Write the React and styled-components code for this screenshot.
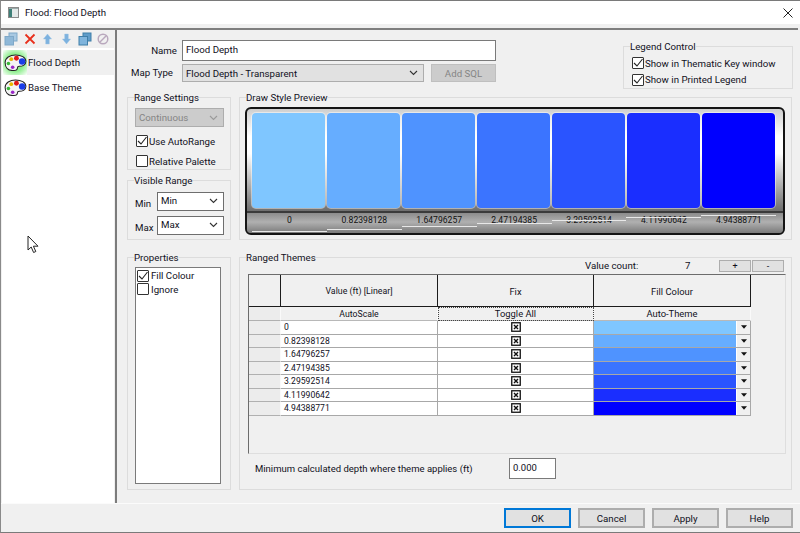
import React from 'react';
import styled, { createGlobalStyle } from 'styled-components';

const Global = createGlobalStyle`
  html, body {
    margin: 0;
    overflow: hidden;
    background: #f0f0f0;
  }
  * {
    box-sizing: border-box;
  }
`;

const Win = styled.div`
  width: 800px;
  height: 533px;
  display: flex;
  flex-direction: column;
  background: #f0f0f0;
  border-top: 1px solid #7a7a7a;
  border-left: 1px solid #8a8a8a;
  border-bottom: 1px solid #7a7a7a;
  font-family: Roboto, "Noto Sans", sans-serif;
  font-size: 9.7px;
  color: #10101c;
  white-space: nowrap;
`;

const TitleBar = styled.div`
  height: 23px;
  flex: none;
  display: flex;
  align-items: center;
  background: #fff;
  padding: 0 7px 0 7px;
`;

const TitleText = styled.span`
  margin-left: 6px;
  flex: 1;
`;

const Body = styled.div`
  flex: 1;
  min-height: 0;
  margin-top: 4px;
  display: flex;
  border-top: 2px solid #7e7e7e;
  margin-right: 2px;
`;

const Sidebar = styled.div`
  position: relative;
  width: 112px;
  margin-left: 1px;
  background: #fff;
  flex: none;
`;

const Toolbar = styled.div`
  height: 18px;
  display: flex;
  align-items: center;
  background: #f0f0f0;
  margin-bottom: 2px;
`;

const ToolSlot = styled.span`
  width: 18.4px;
  display: flex;
  justify-content: center;
`;

const ThemeRow = styled.div`
  height: 25px;
  display: flex;
  align-items: center;
  padding-left: 1px;
`;

const ThemeIcon = styled.span`
  width: 24px;
  height: 25px;
  display: flex;
  align-items: center;
  justify-content: center;
  background: ${(p) => (p.$glow ? 'radial-gradient(circle, #8cee8c 50%, #ffffff 100%)' : 'transparent')};
`;

const ThemeName = styled.span`
  flex: 1;
  height: 25px;
  line-height: 25px;
  padding-left: 1px;
  background: ${(p) => (p.$active ? '#f0f0f0' : 'transparent')};
`;

const Pointer = styled.svg`
  position: absolute;
  left: 25px;
  top: 205px;
`;

const Main = styled.div`
  flex: 1;
  margin-left: 1px;
  border-left: 2px solid #7c7c7c;
  padding: 9px 5px 0 10px;
  display: flex;
  flex-direction: column;
`;

const TopRow = styled.div`
  height: 51px;
  flex: none;
  display: flex;
  justify-content: space-between;
`;

const Form = styled.div`
  display: flex;
  flex-direction: column;
  gap: 3px;
  padding-top: 1px;
`;

const FormRow = styled.div`
  display: flex;
  align-items: center;
`;

const FormLabel = styled.span`
  width: 50px;
  text-align: right;
  margin-right: 5px;
  padding-bottom: 1px;
  padding-right: ${(p) => p.$pr || 0}px;
`;

const TextBox = styled.div`
  width: ${(p) => p.$w}px;
  height: ${(p) => p.$h}px;
  background: #fff;
  border: 1px solid #7a7a7a;
  padding: 0 0 3px 3px;
  display: flex;
  align-items: center;
`;

const Select = styled.div`
  width: ${(p) => p.$w}px;
  height: ${(p) => p.$h}px;
  display: flex;
  align-items: center;
  justify-content: space-between;
  padding: 0 5px ${(p) => (p.$white ? 2 : 0)}px 3px;
  background: ${(p) => (p.$white ? '#fff' : p.$off ? '#cccccc' : '#e1e1e1')};
  color: ${(p) => (p.$off ? '#858585' : 'inherit')};
  border: ${(p) => (p.$white ? '1px solid #6e6e6e' : '1px solid #adadad')};
`;

const GrayButton = styled.div`
  width: 65px;
  height: 18px;
  margin-left: 7px;
  display: flex;
  align-items: center;
  justify-content: center;
  background: #cccccc;
  border: 1px solid #bfbfbf;
  color: #858585;
`;

const Group = styled.fieldset`
  margin: 0;
  padding: 0;
  min-width: 0;
  width: ${(p) => (p.$w ? `${p.$w}px` : 'auto')};
  height: ${(p) => (p.$h ? `${p.$h}px` : 'auto')};
  border: 1px solid #dcdcdc;
  display: flex;
  flex-direction: column;
`;

const Caption = styled.legend`
  margin-left: 6px;
  padding: 0;
  height: 14px;
  line-height: 16px;
`;

const Columns = styled.div`
  display: grid;
  grid-template-columns: 104px 553px;
  grid-template-rows: 150px 240px;
  column-gap: 8px;
  row-gap: 10px;
`;

const Stack = styled.div`
  display: flex;
  flex-direction: column;
  gap: 3px;
`;

const RangeBody = styled.div`
  padding: ${(p) => p.$pt}px 6px 0 7px;
  display: flex;
  flex-direction: column;
`;

const CheckRow = styled.label`
  display: flex;
  align-items: center;
  gap: ${(p) => p.$gap ?? 1}px;
  height: ${(p) => p.$h || 20}px;
  padding-left: ${(p) => p.$pl || 0}px;
  margin-top: ${(p) => p.$mt || 0}px;
`;

const Box = styled.span`
  width: 12px;
  height: 12px;
  flex: none;
  border: 1px solid #333;
  border-radius: 1px;
  background: #fff;
  display: flex;
  align-items: center;
  justify-content: center;
`;

const MinMaxRow = styled.div`
  display: flex;
  align-items: center;
  justify-content: space-between;
  margin-bottom: 5px;
`;

const MinMaxLabel = styled.span`
  padding-top: 3px;
`;

const Preview = styled.div`
  margin: 3px 6px 0 5px;
  height: 128px;
  border: 2px solid #141414;
  border-radius: 6px;
  background: linear-gradient(#cfcfcf 0, #ffffff 22%, #ffffff 36%, #6f6f6f 82%);
  display: flex;
  flex-direction: column;
  overflow: hidden;
`;

const SwatchRow = styled.div`
  display: flex;
  gap: 2px;
  padding: 4px 0 0 5px;
`;

const Swatch = styled.div`
  width: 73px;
  height: 95px;
  border-radius: 4px;
  background: ${(p) => p.$c};
  box-shadow: 0 0 0 1px rgba(255, 255, 255, 0.45);
`;

const Strip = styled.div`
  margin-top: 3px;
  flex: 1;
  display: flex;
  padding-left: 5px;
  border-top: 2px solid #3a3a3a;
  background: linear-gradient(#8b8b8b, #b0b0b0 45%, #7a7a7a);
`;

const StripCell = styled.div`
  position: relative;
  width: 74.9px;
  text-align: center;
  font-size: 8.6px;
  line-height: 15px;
  color: #111;
`;

const Tick = styled.span`
  position: absolute;
  left: 0;
  right: 0;
  top: ${(p) => p.$y}px;
  height: 1px;
  background: #e8e8e8;
`;

const CountRow = styled.div`
  margin-top: -5px;
  height: 13px;
  display: flex;
  align-items: center;
  padding-right: 7px;
  justify-content: flex-end;
`;

const CountLabel = styled.span`
  width: 100px;
`;

const CountValue = styled.span`
  width: 33px;
`;

const Mini = styled.div`
  width: 32px;
  height: 12px;
  margin-left: 1px;
  background: #e1e1e1;
  border: 1px solid #adadad;
  display: flex;
  align-items: center;
  justify-content: center;
  font-size: 9px;
  line-height: 10px;
`;

const Frame = styled.div`
  margin: 2px 5px 0 8px;
  height: 180px;
  border-left: 1px solid #6c6c6c;
  border-top: 1px solid #6c6c6c;
  border-right: 1px solid #dedede;
  border-bottom: 1px solid #dedede;
`;

const Table = styled.div`
  display: grid;
  grid-template-columns: 32px 157px 156px 157px;
  grid-template-rows: 32px 14px repeat(7, 13.5px);
  font-size: 9.4px;
`;

const HeadCell = styled.div`
  padding-top: 1px;
  border-right: 1px solid #1c1c1c;
  border-bottom: 1px solid #1c1c1c;
  display: flex;
  align-items: center;
  justify-content: center;
  font-size: ${(p) => (p.$small ? '8.8px' : 'inherit')};
`;

const ActionCell = styled.div`
  display: flex;
  align-items: center;
  justify-content: center;
  font-size: ${(p) => (p.$small ? '8.7px' : 'inherit')};
  border-right: 1px solid #fafafa;
  border-bottom: 1px solid #b8b8b8;
  ${(p) => p.$focus && 'outline: 1px dotted #444; outline-offset: -1px;'}
`;

const RowHead = styled.div`
  background: #ececec;
  border-right: 1px solid #fafafa;
  border-bottom: 1px solid #b0b0b0;
`;

const ValueCell = styled.div`
  background: #fff;
  border-right: 1px solid #a8a8a8;
  border-bottom: 1px solid #a8a8a8;
  padding-left: 3px;
  display: flex;
  align-items: center;
  font-size: 8.6px;
`;

const FixCell = styled(ValueCell)`
  padding-left: 0;
  justify-content: center;
`;

const ColourCell = styled.div`
  display: flex;
  border-bottom: 1px solid #a8a8a8;
`;

const ColourFill = styled.div`
  flex: 1;
  background: ${(p) => p.$c};
`;

const ArrowBtn = styled.div`
  width: 15px;
  background: #f0f0f0;
  border-left: 1px solid #fff;
  border-right: 1px solid #a8a8a8;
  display: flex;
  align-items: center;
  justify-content: center;
`;

const DepthRow = styled.div`
  margin-top: 4px;
  display: flex;
  align-items: center;
  padding-left: 15px;
  font-size: 9.5px;
`;

const DepthLabel = styled.span`
  width: 254px;
`;

const ListBox = styled.div`
  margin: 3px 9px 5px 7px;
  flex: 1;
  background: #fff;
  border: 1px solid #7a7a7a;
  padding: 1px 0 0 1px;
`;

const Footer = styled.div`
  height: 29px;
  flex: none;
  border-top: 1px solid #fbfbfb;
  display: flex;
  align-items: flex-start;
  justify-content: flex-end;
  gap: 7px;
  padding: 4px 7px 0 0;
`;

const FootBtn = styled.div`
  width: 67px;
  height: 20px;
  background: #e1e1e1;
  border: ${(p) => (p.$main ? '2px solid #0078d7' : '2px solid #adadad')};
  display: flex;
  align-items: center;
  justify-content: center;
`;

const shades = ['#7fc6ff', '#66adff', '#4f93ff', '#3b74ff', '#2a54ff', '#1a2eff', '#0000ff'];
const values = ['0', '0.82398128', '1.64796257', '2.47194385', '3.29592514', '4.11990642', '4.94388771'];
const ticks = [18, 16, 13, 10, 7, 4, 2];

const Chevron = ({ color = '#333' }) => (
  <svg width="9" height="6" viewBox="0 0 9 6">
    <path d="M1 1l3.5 3.5L8 1" fill="none" stroke={color} strokeWidth="1.1" />
  </svg>
);

const Tick3 = () => (
  <svg width="10" height="10" viewBox="0 0 10 10">
    <path d="M1 5l3 3 5.5-7" fill="none" stroke="#222" strokeWidth="1.1" />
  </svg>
);

const Check = ({ on }) => <Box>{on && <Tick3 />}</Box>;

const XBox = () => (
  <svg width="10" height="10" viewBox="0 0 10 10">
    <rect x="0.75" y="0.75" width="8.5" height="8.5" fill="#fff" stroke="#111" strokeWidth="1.3" />
    <path d="M3 3l4 4M7 3l-4 4" stroke="#111" strokeWidth="1.4" />
  </svg>
);

const CopyIcon = ({ faded }) => (
  <svg width="14" height="14" viewBox="0 0 14 14">
    <rect x="5" y="1" width="8" height="8" fill={faded ? '#a9c9e2' : '#5f9cc9'} stroke={faded ? '#7fa8c8' : '#3f7ea8'} />
    <rect x="1" y="4.5" width="8.5" height="8.5" fill={faded ? '#8fb8d8' : '#7fb4dc'} stroke={faded ? '#7fa8c8' : '#3f7ea8'} />
  </svg>
);

const RedX = () => (
  <svg width="12" height="12" viewBox="0 0 12 12">
    <path d="M1.5 1.5l9 9M10.5 1.5l-9 9" stroke="#e8301c" strokeWidth="1.8" />
  </svg>
);

const BlueArrow = ({ down }) => (
  <svg width="9" height="12" viewBox="0 0 10 12" style={down ? { transform: 'scaleY(-1)' } : undefined}>
    <path d="M5 0.5L9.5 6H7v5.5H3V6H0.5z" fill="#7db2df" stroke="#9cc4e6" strokeWidth="0.5" />
  </svg>
);

const NoSign = () => (
  <svg width="12" height="12" viewBox="0 0 13 13">
    <circle cx="6.5" cy="6.5" r="5.2" fill="none" stroke="#b9a8bd" strokeWidth="1.6" />
    <path d="M3 10L10 3" stroke="#b9a8bd" strokeWidth="1.6" />
  </svg>
);

const Palette = () => (
  <svg width="23" height="17" viewBox="0 0 24 18">
    <path d="M1 9C1 4 6 1 12 1c6 0 11 2.5 11 7 0 4-4 5-7 5-2 0-2 1-2 2 0 2-2 2.5-5 2.5C4 17.5 1 14 1 9z" fill="#f4f4f4" stroke="#222" strokeWidth="1.1" />
    <circle cx="13" cy="4.5" r="2.6" fill="#e01818" />
    <circle cx="19" cy="8" r="3.4" fill="#1a3de8" />
    <circle cx="7.5" cy="5.5" r="2" fill="#e6b800" />
    <circle cx="4.5" cy="10" r="1.9" fill="#38b838" />
    <circle cx="9" cy="14" r="1.9" fill="#9a28c8" />
  </svg>
);

function App() {
  return (
    <Win>
      <Global />
      <TitleBar>
        <svg width="11" height="11" viewBox="0 0 11 11">
          <rect x="0.5" y="0.5" width="10" height="10" fill="#e4e8e8" stroke="#8a8a8a" />
          <rect x="1" y="2" width="3" height="8" fill="#3f7f78" />
          <rect x="1" y="1" width="9" height="1" fill="#9aa" />
        </svg>
        <TitleText>Flood: Flood Depth</TitleText>
        <svg width="10" height="10" viewBox="0 0 10 10">
          <path d="M0.5 0.5l9 9M9.5 0.5l-9 9" stroke="#222" strokeWidth="1" />
        </svg>
      </TitleBar>
      <Body>
        <Sidebar>
          <Toolbar>
            <ToolSlot><CopyIcon faded /></ToolSlot>
            <ToolSlot><RedX /></ToolSlot>
            <ToolSlot><BlueArrow /></ToolSlot>
            <ToolSlot><BlueArrow down /></ToolSlot>
            <ToolSlot><CopyIcon /></ToolSlot>
            <ToolSlot><NoSign /></ToolSlot>
          </Toolbar>
          <ThemeRow>
            <ThemeIcon $glow><Palette /></ThemeIcon>
            <ThemeName $active>Flood Depth</ThemeName>
          </ThemeRow>
          <ThemeRow>
            <ThemeIcon><Palette /></ThemeIcon>
            <ThemeName>Base Theme</ThemeName>
          </ThemeRow>
          <Pointer width="13" height="19" viewBox="0 0 13 19">
            <path d="M1 1v14l3.2-3 2.4 5.5 2.2-1-2.4-5.3H11z" fill="#fff" stroke="#222" strokeWidth="1" />
          </Pointer>
        </Sidebar>
        <Main>
          <TopRow>
            <Form>
              <FormRow>
                <FormLabel>Name</FormLabel>
                <TextBox $w={314} $h={21}>Flood Depth</TextBox>
              </FormRow>
              <FormRow>
                <FormLabel $pr={4}>Map Type</FormLabel>
                <Select $w={242} $h={18}>
                  Flood Depth - Transparent
                  <Chevron />
                </Select>
                <GrayButton>Add SQL</GrayButton>
              </FormRow>
            </Form>
            <Group $w={170} $h={50}>
              <Caption>Legend Control</Caption>
              <CheckRow $h={17} $pl={8} $mt={2}><Check on />Show in Thematic Key window</CheckRow>
              <CheckRow $h={17} $pl={8}><Check on />Show in Printed Legend</CheckRow>
            </Group>
          </TopRow>
          <Columns>
            <Stack>
              <Group $h={80}>
                <Caption>Range Settings</Caption>
                <RangeBody $pt={4}>
                  <Select $w={89} $h={19} $off>
                    Continuous
                    <Chevron color="#9a9a9a" />
                  </Select>
                  <CheckRow $h={20} $pl={1} $mt={4}><Check on />Use AutoRange</CheckRow>
                  <CheckRow $h={20} $pl={1}><Check />Relative Palette</CheckRow>
                </RangeBody>
              </Group>
              <Group $h={67}>
                <Caption>Visible Range</Caption>
                <RangeBody $pt={5}>
                  <MinMaxRow>
                    <MinMaxLabel>Min</MinMaxLabel>
                    <Select $w={67} $h={19} $white>Min<Chevron /></Select>
                  </MinMaxRow>
                  <MinMaxRow>
                    <MinMaxLabel>Max</MinMaxLabel>
                    <Select $w={67} $h={19} $white>Max<Chevron /></Select>
                  </MinMaxRow>
                </RangeBody>
              </Group>
            </Stack>
            <Group>
              <Caption>Draw Style Preview</Caption>
              <Preview>
                <SwatchRow>
                  {shades.map((c) => <Swatch key={c} $c={c} />)}
                </SwatchRow>
                <Strip>
                  {values.map((v, i) => (
                    <StripCell key={v}>
                      {v}
                      <Tick $y={ticks[i]} />
                    </StripCell>
                  ))}
                </Strip>
              </Preview>
            </Group>
            <Group>
              <Caption>Properties</Caption>
              <ListBox>
                <CheckRow $h={13.5} $gap={2}><Check on />Fill Colour</CheckRow>
                <CheckRow $h={13.5} $gap={2}><Check />Ignore</CheckRow>
              </ListBox>
            </Group>
            <Group>
              <Caption>Ranged Themes</Caption>
              <CountRow>
                <CountLabel>Value count:</CountLabel>
                <CountValue>7</CountValue>
                <Mini>+</Mini>
                <Mini>-</Mini>
              </CountRow>
              <Frame>
                <Table>
                  <HeadCell />
                  <HeadCell $small>Value (ft) [Linear]</HeadCell>
                  <HeadCell>Fix</HeadCell>
                  <HeadCell>Fill Colour</HeadCell>
                  <RowHead />
                  <ActionCell $small>AutoScale</ActionCell>
                  <ActionCell $focus>Toggle All</ActionCell>
                  <ActionCell>Auto-Theme</ActionCell>
                  {values.map((v, i) => (
                    <React.Fragment key={v}>
                      <RowHead />
                      <ValueCell>{v}</ValueCell>
                      <FixCell><XBox /></FixCell>
                      <ColourCell>
                        <ColourFill $c={shades[i]} />
                        <ArrowBtn>
                          <svg width="6" height="4" viewBox="0 0 7 4"><path d="M0 0h7L3.5 4z" fill="#111" /></svg>
                        </ArrowBtn>
                      </ColourCell>
                    </React.Fragment>
                  ))}
                </Table>
              </Frame>
              <DepthRow>
                <DepthLabel>Minimum calculated depth where theme applies (ft)</DepthLabel>
                <TextBox $w={47} $h={21}>0.000</TextBox>
              </DepthRow>
            </Group>
          </Columns>
        </Main>
      </Body>
      <Footer>
        <FootBtn $main>OK</FootBtn>
        <FootBtn>Cancel</FootBtn>
        <FootBtn>Apply</FootBtn>
        <FootBtn>Help</FootBtn>
      </Footer>
    </Win>
  );
}

export default App;
